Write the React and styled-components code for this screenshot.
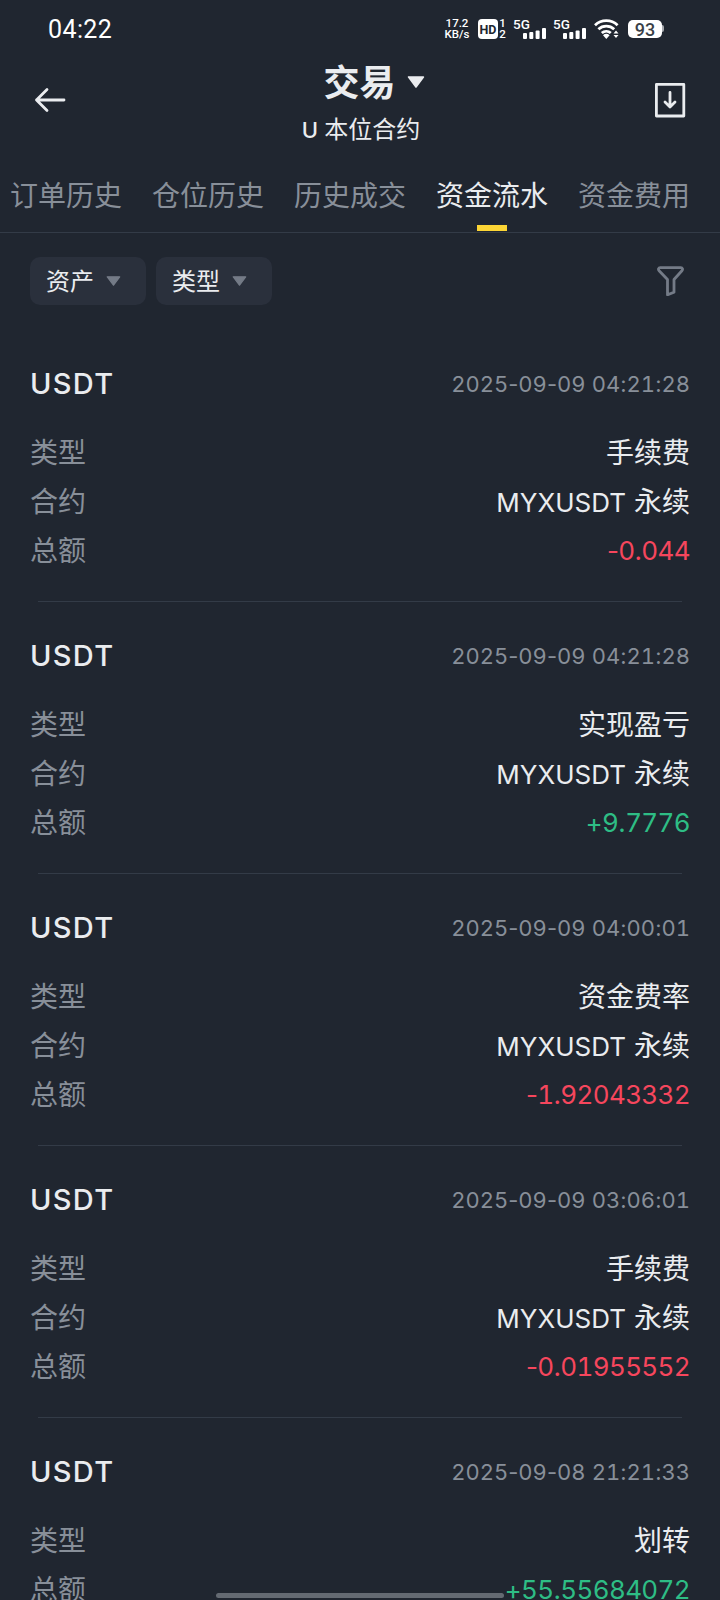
import React from 'react';
import styled, { createGlobalStyle } from 'styled-components';

const GlobalStyle = createGlobalStyle`
  * {
    box-sizing: border-box;
  }

  body {
    margin: 0;
    background-color: #202630;
    font-family: Inter, 'Noto Sans CJK SC', sans-serif;
    color: #eaecef;
  }
`;

const Page = styled.div`
  position: relative;
  display: flex;
  flex-direction: column;
  width: 720px;
  height: 1600px;
  overflow: hidden;
  background-color: #202630;
`;

const StatusBar = styled.div`
  display: flex;
  align-items: center;
  justify-content: space-between;
  flex-shrink: 0;
  height: 57px;
  padding: 0 56px 0 48px;
  color: #fff;
`;

const Clock = styled.span`
  padding-top: 2px;
  font-family: Roboto, sans-serif;
  font-size: 25px;
  line-height: 30px;
  letter-spacing: 0.4px;
`;

const StatusIcons = styled.div`
  display: flex;
  align-items: center;
  height: 20px;
`;

const NetSpeed = styled.div`
  display: flex;
  flex-direction: column;
  align-items: center;
  width: 24px;
  margin-right: 9px;
  font-family: Roboto, sans-serif;
  font-size: 11.5px;
  font-weight: 500;
  line-height: 11px;
  white-space: nowrap;
`;

const HdBadge = styled.span`
  width: 20px;
  height: 20px;
  border-radius: 4px;
  background-color: #fff;
  color: #202630;
  font-family: Roboto, sans-serif;
  font-size: 12.5px;
  font-weight: 700;
  line-height: 21px;
  text-align: center;
`;

const SimNumbers = styled.div`
  display: flex;
  flex-direction: column;
  width: 7px;
  margin: 0 8px 0 1px;
  font-family: Roboto, sans-serif;
  font-size: 11.5px;
  font-weight: 500;
  line-height: 11px;
  text-align: center;
`;

const Signal = styled.div`
  display: flex;
  width: 32px;
  height: 20px;
  margin-right: 8px;
`;

const SignalType = styled.span`
  width: 8px;
  margin-left: -1px;
  margin-right: 1px;
  font-family: Roboto, sans-serif;
  font-size: 13.5px;
  font-weight: 500;
  line-height: 10px;
  white-space: nowrap;
`;

const WifiIcon = styled.svg`
  margin-right: 9px;
`;

const Battery = styled.div`
  display: flex;
  align-items: center;

  &::after {
    content: '';
    width: 2px;
    height: 7px;
    border-radius: 0 2px 2px 0;
    background-color: #a6a9ae;
  }
`;

const BatteryLevel = styled.span`
  width: 34px;
  height: 18px;
  border-radius: 5px;
  background-color: #fff;
  color: #3a3f48;
  font-family: Roboto, sans-serif;
  font-size: 18px;
  font-weight: 500;
  line-height: 19px;
  text-align: center;
`;

const Header = styled.header`
  display: grid;
  grid-template-columns: 60px 1fr 60px;
  grid-template-rows: 86px;
  align-items: center;
  flex-shrink: 0;
  height: 86px;
  padding: 0 30px;
`;

const HeaderIcon = styled.div`
  display: flex;
  justify-content: ${props => props.$align || 'flex-start'};
  padding-bottom: 1px;
`;

const TitleGroup = styled.div`
  display: flex;
  flex-direction: column;
  align-items: center;
  padding-top: 12px;
`;

const Title = styled.h1`
  display: flex;
  align-items: center;
  gap: 11px;
  margin: 0;
  padding-left: 28px;
  font-size: 36px;
  font-weight: 600;
  line-height: 48px;

  svg {
    margin-bottom: 2px;
  }
`;

const Subtitle = styled.span`
  display: flex;
  gap: 6px;
  padding-left: 2px;
  font-size: 24px;
  line-height: 46px;
`;

const Unit = styled.span`
  font-size: 22px;
  font-weight: 500;
`;

const Tabs = styled.nav`
  display: flex;
  gap: 30px;
  flex-shrink: 0;
  height: 90px;
  padding: 0 10px;
  border-bottom: 1px solid #333b47;
`;

const Tab = styled.div`
  display: flex;
  flex-direction: column;
  align-items: center;
  flex-shrink: 0;
  padding-top: 33px;
  font-size: 28px;
  line-height: 40px;
  color: ${props => (props.$active ? '#eaecef' : '#888f99')};

  &::after {
    content: '';
    width: 30px;
    height: 6px;
    margin-top: 9px;
    background-color: ${props => (props.$active ? '#fcd535' : 'transparent')};
  }
`;

const FilterBar = styled.div`
  display: flex;
  align-items: center;
  gap: 10px;
  flex-shrink: 0;
  height: 97px;
  padding: 0 36px 2px 30px;
`;

const Chip = styled.div`
  display: flex;
  align-items: center;
  gap: 12px;
  width: 116px;
  height: 48px;
  padding-left: 16px;
  border-radius: 10px;
  background-color: #2a303c;
  font-size: 24px;
  line-height: 50px;
`;

const ChipText = styled.span`
  padding-top: 2px;
`;

const FilterIcon = styled.svg`
  margin-left: auto;
`;

const Entry = styled.section`
  display: flex;
  flex-direction: column;
  flex-shrink: 0;
  height: 272px;
  padding: 23px 30px 0;
`;

const EntryHead = styled.div`
  display: flex;
  align-items: center;
  justify-content: space-between;
  height: 60px;
  margin-bottom: 16px;
`;

const Asset = styled.span`
  font-size: 29px;
  font-weight: 500;
  letter-spacing: 1.3px;
`;

const Time = styled.span`
  padding-top: 1px;
  font-size: 22px;
  white-space: pre;
  color: #888f99;
`;

const Row = styled.div`
  display: flex;
  align-items: center;
  justify-content: space-between;
  height: 49px;
  font-size: 28px;
  line-height: 49px;
`;

const Label = styled.span`
  color: #888f99;
`;

const Contract = styled.span`
  display: flex;
  gap: 8px;
`;

const Symbol = styled.span`
  font-size: 26px;
`;

const Amount = styled.span`
  margin-top: -2px;
  font-size: 26px;
  letter-spacing: -0.65px;
  color: ${props => (props.$up ? '#2ebd85' : '#f6465d')};
`;

const Digits = styled.span`
  font-variant-numeric: tabular-nums;
`;

const Divider = styled.div`
  height: 1px;
  margin: 25px 8px 0;
  background-color: #333b47;
`;

const HomeIndicator = styled.div`
  position: absolute;
  left: 216px;
  bottom: 2px;
  width: 288px;
  height: 5px;
  border-radius: 3px;
  background-color: #646a72;
`;

// digits get a fixed width, signs and dots keep their own
const Figures = ({ value }) =>
  value
    .split(/(\d+)/)
    .filter(Boolean)
    .map((part, index) => (/\d/.test(part) ? <Digits key={index}>{part}</Digits> : part));

const Caret = ({ width, height, color }) => (
  <svg width={width} height={height} viewBox="0 0 18 12">
    <path d="M1.6 1h14.8L9 11z" fill={color} stroke={color} strokeWidth="1.6" strokeLinejoin="round" />
  </svg>
);

const NetworkSignal = () => (
  <Signal>
    <SignalType>5G</SignalType>
    <svg width="24" height="20" viewBox="0 0 24 20" fill="#fff">
      <rect x="1" y="14" width="4" height="6" rx="1" />
      <rect x="7.3" y="13" width="4" height="7" rx="1" />
      <rect x="13.6" y="11.5" width="4" height="8.5" rx="1" />
      <rect x="20" y="9" width="4" height="11" rx="1" />
    </svg>
  </Signal>
);

const tabs = ['订单历史', '仓位历史', '历史成交', '资金流水', '资金费用'];

const records = [
  { time: '2025-09-09 04:21:28', type: '手续费', symbol: 'MYXUSDT', amount: '-0.044' },
  { time: '2025-09-09 04:21:28', type: '实现盈亏', symbol: 'MYXUSDT', amount: '+9.7776' },
  { time: '2025-09-09 04:00:01', type: '资金费率', symbol: 'MYXUSDT', amount: '-1.92043332' },
  { time: '2025-09-09 03:06:01', type: '手续费', symbol: 'MYXUSDT', amount: '-0.01955552' },
  { time: '2025-09-08 21:21:33', type: '划转', amount: '+55.55684072' },
];

export default function App() {
  return (
    <Page>
      <GlobalStyle />
      <StatusBar>
        <Clock>04:22</Clock>
        <StatusIcons>
          <NetSpeed>
            <span>17.2</span>
            <span>KB/s</span>
          </NetSpeed>
          <HdBadge>HD</HdBadge>
          <SimNumbers>
            <span>1</span>
            <span>2</span>
          </SimNumbers>
          <NetworkSignal />
          <NetworkSignal />
          <WifiIcon width="25" height="20" viewBox="0 0 25 20" fill="none" stroke="#fff" strokeWidth="2.8">
            <path d="M1 6.2a16.5 16.5 0 0 1 22.6 0" />
            <path d="M4.4 10.2a11.6 11.6 0 0 1 15.8 0" />
            <path d="M7.8 14a6.8 6.8 0 0 1 9 0" />
            <path d="M9 16.2a5 5 0 0 1 6.6 0L12.3 20z" fill="#fff" stroke="none" />
            <path d="M19.5 14.5l2.5-3 2.5 3zM19.5 16l2.5 3 2.5-3z" fill="#fff" stroke="none" />
          </WifiIcon>
          <Battery>
            <BatteryLevel>93</BatteryLevel>
          </Battery>
        </StatusIcons>
      </StatusBar>

      <Header>
        <HeaderIcon>
          <svg width="40" height="28" viewBox="0 0 40 28" fill="none" stroke="#eaecef" strokeWidth="2.8" strokeLinecap="round" strokeLinejoin="round">
            <path d="M34 14H6.5M17 3.5L6.5 14 17 24.5" />
          </svg>
        </HeaderIcon>
        <TitleGroup>
          <Title>
            交易
            <Caret width="18" height="12" color="#eaecef" />
          </Title>
          <Subtitle>
            <Unit>U</Unit>
            本位合约
          </Subtitle>
        </TitleGroup>
        <HeaderIcon $align="flex-end">
          <svg width="35" height="36" viewBox="0 0 35 36" fill="none" stroke="#eaecef" strokeWidth="2.8" strokeLinejoin="round">
            <rect x="1.4" y="2.4" width="27.4" height="31.6" />
            <path d="M15 10.5v14.5M10 20l5 5 5-5" strokeLinecap="round" />
          </svg>
        </HeaderIcon>
      </Header>

      <Tabs>
        {tabs.map(tab => (
          <Tab key={tab} $active={tab === '资金流水'}>{tab}</Tab>
        ))}
      </Tabs>

      <FilterBar>
        <Chip>
          <ChipText>资产</ChipText>
          <Caret width="15" height="10" color="#747b87" />
        </Chip>
        <Chip>
          <ChipText>类型</ChipText>
          <Caret width="15" height="10" color="#747b87" />
        </Chip>
        <FilterIcon width="27" height="30" viewBox="0 0 27 30" fill="none" stroke="#747b87" strokeWidth="2.8" strokeLinejoin="round">
          <path d="M3.2 1.6h20.6c1.7 0 2.3 1.9 1.1 3.1L17 13.5v12.7l-6.5 2.6V13.5L2.1 4.7C.9 3.5 1.5 1.6 3.2 1.6z" />
        </FilterIcon>
      </FilterBar>

      {records.map((record, index) => (
        <Entry key={index}>
          <EntryHead>
            <Asset>USDT</Asset>
            <Time><Figures value={record.time} /></Time>
          </EntryHead>
          <Row>
            <Label>类型</Label>
            <span>{record.type}</span>
          </Row>
          {record.symbol && (
            <Row>
              <Label>合约</Label>
              <Contract>
                <Symbol>{record.symbol}</Symbol>
                永续
              </Contract>
            </Row>
          )}
          <Row>
            <Label>总额</Label>
            <Amount $up={record.amount.startsWith('+')}><Figures value={record.amount} /></Amount>
          </Row>
          <Divider />
        </Entry>
      ))}
      <HomeIndicator />
    </Page>
  );
}
